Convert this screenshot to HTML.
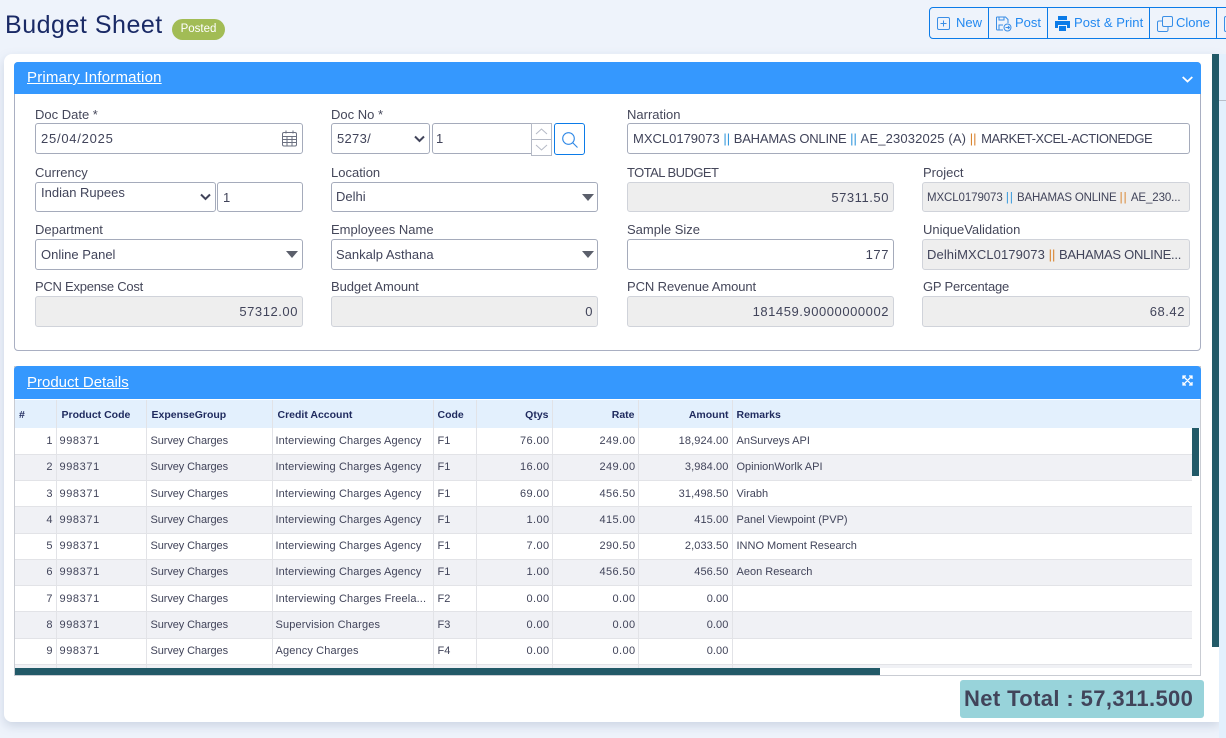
<!DOCTYPE html>
<html lang="en"><head><meta charset="utf-8"><title>Budget Sheet</title>
<style>
*{box-sizing:border-box}
html,body{margin:0;padding:0}
body{width:1226px;height:738px;overflow:hidden;background:#eef3fb;position:relative;font-family:"Liberation Sans",sans-serif;color:#3f4254}
.a{position:absolute;white-space:nowrap}
.lb{position:absolute;font-size:13px;line-height:16px;color:#45475a;white-space:nowrap}
.in{position:absolute;background:#fff;border:1px solid #a5abbb;border-radius:3px;font-size:13px;line-height:29px;padding:0 5px;color:#41445a;white-space:nowrap;overflow:hidden}
.ro{background:#eeeeee;border-color:#d0d3da;text-align:right;padding-right:4px;letter-spacing:.55px}
.b{color:#2f95dc}.o{color:#d9822b}
.hdr{position:absolute;background:#3598fe;border-radius:4px 4px 0 0;color:#fff}
.hdr span{position:absolute;left:13px;top:6px;font-size:15px;line-height:19px;text-decoration:underline}
.btn{position:absolute;top:7px;height:32px;border:1px solid #0b7be8;border-left:0;background:transparent;color:#2288f0;font-size:13px;line-height:29px;white-space:nowrap}
.btn span{position:absolute;top:0}
.btn svg{position:absolute}
table{position:absolute;left:15px;top:400px;border-collapse:collapse;table-layout:fixed;width:1177px;font-size:11px;color:#41445a}
th{height:28px;background:#e3f0fd;color:#1f2a5e;font-size:10.5px;text-align:left;padding:2px 3px 0 5px;border-right:1px solid #e2e3e7;font-weight:700;white-space:nowrap}
th:nth-child(1),th:nth-child(5),th:nth-child(9){padding-left:4px}
td{height:26.25px;padding:0 3px 0 4px;border-right:1px solid #e2e3e7;border-bottom:1px solid #e2e3e7;white-space:nowrap;overflow:hidden}
th:last-child,td:last-child{border-right:0}
tr:nth-child(even) td{background:#f0f1f5}
td:nth-child(2){letter-spacing:.6px;padding-left:3px}
td:nth-child(3){letter-spacing:-.1px}
td:nth-child(4){letter-spacing:.13px;padding-left:3px}
td:nth-child(6),td:nth-child(7){letter-spacing:.4px;padding-right:2px}
td:nth-child(8){letter-spacing:.1px;padding-right:3px}
.r{text-align:right}
</style></head>
<body>
<div class="a" style="left:5px;top:9px;font-size:25px;line-height:32px;color:#1a2a66;letter-spacing:.52px">Budget Sheet</div>
<div class="a" style="left:172px;top:19px;width:53px;height:21px;border-radius:11px;background:#a2bc55;color:#fff;font-size:11.5px;line-height:21px;text-align:center">Posted</div>

<div class="btn" style="left:929px;width:60px;border-left:1px solid #0b7be8;border-radius:4px 0 0 4px"><svg style="left:7px;top:9px" width="14" height="14" viewBox="0 0 14 14" fill="none" stroke="#3a8ee6"><rect x=".5" y=".5" width="12" height="12" rx="1.5"/><path d="M6.5 3.5v6M3.5 6.5h6"/></svg><span style="left:26px">New</span></div>
<div class="btn" style="left:989px;width:59px"><svg style="left:6px;top:8px" width="18" height="16" viewBox="0 0 18 16" fill="none" stroke="#3a8ee6"><path d="M1.5 1h9l2.5 2.5V7M8 14H2.500a1 1 0 0 1-1-1V1M4 1v3h5V1M4 14V9h4"/><circle cx="12.500" cy="11.500" r="3.500"/><path d="M10.500 11.500h4M13 10l1.500 1.500L13 13"/></svg><span style="left:26px">Post</span></div>
<div class="btn" style="left:1048px;width:102px"><svg style="left:7px;top:8px" width="15" height="15" viewBox="0 0 15 15" fill="#0b7be8"><path d="M3 0h9v4H3zM0 5h15v7h-3V9H3v3H0z"/><path d="M4 10h7v5H4z"/></svg><span style="left:26px;letter-spacing:.05px">Post &amp; Print</span></div>
<div class="btn" style="left:1150px;width:67px"><svg style="left:7px;top:8px" width="16" height="16" viewBox="0 0 16 16" fill="none" stroke="#3a8ee6"><rect x="5.500" y=".5" width="10" height="10" rx="1.500"/><path d="M5 5H2a1.500 1.500 0 0 0-1.500 1.500V14A1.500 1.500 0 0 0 2 15.500h7.500A1.500 1.500 0 0 0 11 14v-3"/></svg><span style="left:26px">Clone</span></div>
<div class="btn" style="left:1217px;width:20px"><svg style="left:7px;top:8px" width="13" height="16" viewBox="0 0 13 16" fill="none" stroke="#3a8ee6"><rect x=".5" y=".5" width="12" height="15" rx="1.500"/></svg></div>

<div class="a" style="left:4px;top:54px;width:1215px;height:668px;background:#fff;border-radius:8px 0 0 8px;box-shadow:0 4px 10px rgba(120,135,170,.28)"></div>
<div class="a" style="left:1219px;top:54px;width:7px;height:684px;background:#e3f0fd"></div>
<div class="a" style="left:1219px;top:100px;width:7px;height:1px;background:#b8bec9"></div>
<div class="a" style="left:1212px;top:54px;width:7px;height:593px;background:#225a68"></div>

<!-- Primary -->
<div class="a" style="left:14px;top:62px;width:1187px;height:289px;border:1px solid #a9afc2;border-radius:4px"></div>
<div class="hdr" style="left:14px;top:62px;width:1187px;height:32px"><span style="letter-spacing:.2px">Primary Information</span>
<svg style="position:absolute;left:1168px;top:14px" width="11" height="7" viewBox="0 0 11 7" fill="none" stroke="#fff" stroke-width="1.800"><path d="M.7 1l4.800 4.500L10.300 1"/></svg></div>

<div class="lb" style="left:35px;top:107px">Doc Date *</div>
<div class="in" style="left:35px;top:123px;width:268px;height:31px;letter-spacing:.75px">25/04/2025</div>
<svg class="a" style="left:282px;top:130px" width="15" height="17" viewBox="0 0 15 17" fill="none" stroke="#6b7080"><rect x=".5" y="2.500" width="14" height="13.500" rx="1.500"/><path d="M.5 6.500h14M.5 9.500h14M.5 12.500h14M5 6.500V16M10 6.500V16M4 .5v3M11 .5v3"/></svg>

<div class="lb" style="left:331px;top:107px">Doc No *</div>
<div class="in" style="left:331px;top:123px;width:99px;height:31px;letter-spacing:.3px">5273/</div>
<svg class="a" style="left:414px;top:135px" width="11" height="8" viewBox="0 0 11 8" fill="none" stroke="#41445a" stroke-width="2"><path d="M1 1.500l4.500 4.500 4.500-4.500"/></svg>
<div class="in" style="left:432px;top:123px;width:100px;height:31px;padding-left:3px;border-radius:3px 0 0 3px">1</div>
<div class="a" style="left:531px;top:123px;width:21px;height:33px;border:1px solid #b5bac6;background:#fff"></div>
<div class="a" style="left:531px;top:139px;width:21px;height:1px;background:#b5bac6"></div>
<svg class="a" style="left:535px;top:128px" width="13" height="24" viewBox="0 0 13 24" fill="none" stroke="#b5bac6"><path d="M1 6l5.500-5L12 6M1 17l5.500 5 5.500-5"/></svg>
<div class="a" style="left:554px;top:123px;width:31px;height:32px;border:1px solid #0b7be8;border-radius:3px;background:#fff"></div>
<svg class="a" style="left:562px;top:132px" width="16" height="16" viewBox="0 0 16 16" fill="none" stroke="#2f88e6" stroke-width="1.100"><circle cx="6.500" cy="6.500" r="5.800"/><path d="M10.500 10.500L15.500 15.500"/></svg>

<div class="lb" style="left:627px;top:107px">Narration</div>
<div class="in" style="left:627px;top:123px;width:563px;height:31px">MXCL0179073 <span class="b">||</span> <span style="letter-spacing:-.2px">BAHAMAS ONLINE</span> <span class="b">||</span> <span style="letter-spacing:.15px">AE_23032025 (A)</span> <span class="o">||</span> <span style="letter-spacing:-.5px;margin-left:1px">MARKET-XCEL-ACTIONEDGE</span></div>

<div class="lb" style="left:35px;top:165px">Currency</div>
<div class="in" style="left:35px;top:182px;width:181px;height:30px;line-height:20px">Indian Rupees</div>
<svg class="a" style="left:200px;top:193px" width="11" height="8" viewBox="0 0 11 8" fill="none" stroke="#41445a" stroke-width="2"><path d="M1 1.500l4.500 4.500 4.500-4.500"/></svg>
<div class="in" style="left:217px;top:182px;width:86px;height:30px;line-height:29px">1</div>

<div class="lb" style="left:331px;top:165px">Location</div>
<div class="in" style="left:331px;top:182px;width:267px;height:30px;line-height:28px;padding-left:4px">Delhi</div>
<svg class="a" style="left:582px;top:194px" width="12" height="8" viewBox="0 0 12 8"><path d="M0 0h12L6 7z" fill="#5b5f6b"/></svg>

<div class="lb" style="left:627px;top:165px;letter-spacing:-.55px">TOTAL BUDGET</div>
<div class="in ro" style="left:627px;top:182px;width:267px;height:30px">57311.50</div>
<div class="lb" style="left:923px;top:165px">Project</div>
<div class="in ro" style="left:922px;top:182px;width:268px;height:30px;text-align:left;font-size:11.5px;padding-left:4px;letter-spacing:0;line-height:30px"><span style="letter-spacing:-.1px">MXCL0179073</span> <span class="b" style="letter-spacing:1px">||</span> <span style="letter-spacing:-.2px">BAHAMAS ONLINE</span> <span class="o" style="letter-spacing:1px">||</span> <span style="letter-spacing:-.1px">AE_230...</span></div>

<div class="lb" style="left:35px;top:222px">Department</div>
<div class="in" style="left:35px;top:239px;width:268px;height:31px">Online Panel</div>
<svg class="a" style="left:286px;top:251px" width="12" height="8" viewBox="0 0 12 8"><path d="M0 0h12L6 7z" fill="#5b5f6b"/></svg>
<div class="lb" style="left:331px;top:222px">Employees Name</div>
<div class="in" style="left:331px;top:239px;width:267px;height:31px;padding-left:4px">Sankalp Asthana</div>
<svg class="a" style="left:582px;top:251px" width="12" height="8" viewBox="0 0 12 8"><path d="M0 0h12L6 7z" fill="#5b5f6b"/></svg>
<div class="lb" style="left:627px;top:222px">Sample Size</div>
<div class="in" style="left:627px;top:239px;width:267px;height:31px;text-align:right;padding-right:4px;letter-spacing:.55px">177</div>
<div class="lb" style="left:923px;top:222px">UniqueValidation</div>
<div class="in ro" style="left:922px;top:239px;width:268px;height:31px;text-align:left;padding-left:4px;letter-spacing:0"><span style="letter-spacing:.1px">DelhiMXCL0179073</span> <span class="o">||</span> <span style="letter-spacing:-.25px">BAHAMAS ONLINE...</span></div>

<div class="lb" style="left:35px;top:279px;letter-spacing:-.25px">PCN Expense Cost</div>
<div class="in ro" style="left:35px;top:296px;width:268px;height:31px">57312.00</div>
<div class="lb" style="left:331px;top:279px;letter-spacing:-.1px">Budget Amount</div>
<div class="in ro" style="left:331px;top:296px;width:267px;height:31px">0</div>
<div class="lb" style="left:627px;top:279px;letter-spacing:-.1px">PCN Revenue Amount</div>
<div class="in ro" style="left:627px;top:296px;width:267px;height:31px">181459.90000000002</div>
<div class="lb" style="left:923px;top:279px;letter-spacing:-.2px">GP Percentage</div>
<div class="in ro" style="left:922px;top:296px;width:268px;height:31px">68.42</div>

<!-- Product -->
<div class="a" style="left:14px;top:366px;width:1187px;height:310px;border:1px solid #c9ccd3"></div>
<div class="hdr" style="left:14px;top:366px;width:1187px;height:33px"><span style="top:7px">Product Details</span>
<svg style="position:absolute;left:1168px;top:9px" width="11" height="11" viewBox="0 0 11 11" fill="none" stroke="#fff" stroke-width="1.300"><path d="M1 1l9 9M10 1l-9 9M1 4V1h3M7 1h3v3M10 7v3H7M4 10H1V7"/></svg></div>
<div class="a" style="left:15px;top:400px;width:1185px;height:28px;background:#e3f0fd"></div>
<div class="a" style="left:15px;top:400px;width:1177px;height:268px;overflow:hidden">
<table style="left:0;top:0"><colgroup><col style="width:41px"><col style="width:90px"><col style="width:126px"><col style="width:161px"><col style="width:43px"><col style="width:76px"><col style="width:86px"><col style="width:94px"><col></colgroup>
<thead><tr><th>#</th><th>Product Code</th><th>ExpenseGroup</th><th>Credit Account</th><th>Code</th><th class="r">Qtys</th><th class="r">Rate</th><th class="r">Amount</th><th>Remarks</th></tr></thead>
<tbody>
<tr><td class="r">1</td><td>998371</td><td>Survey Charges</td><td>Interviewing Charges Agency</td><td>F1</td><td class="r">76.00</td><td class="r">249.00</td><td class="r">18,924.00</td><td>AnSurveys API</td></tr>
<tr><td class="r">2</td><td>998371</td><td>Survey Charges</td><td>Interviewing Charges Agency</td><td>F1</td><td class="r">16.00</td><td class="r">249.00</td><td class="r">3,984.00</td><td>OpinionWorlk API</td></tr>
<tr><td class="r">3</td><td>998371</td><td>Survey Charges</td><td>Interviewing Charges Agency</td><td>F1</td><td class="r">69.00</td><td class="r">456.50</td><td class="r">31,498.50</td><td>Virabh</td></tr>
<tr><td class="r">4</td><td>998371</td><td>Survey Charges</td><td>Interviewing Charges Agency</td><td>F1</td><td class="r">1.00</td><td class="r">415.00</td><td class="r">415.00</td><td>Panel Viewpoint (PVP)</td></tr>
<tr><td class="r">5</td><td>998371</td><td>Survey Charges</td><td>Interviewing Charges Agency</td><td>F1</td><td class="r">7.00</td><td class="r">290.50</td><td class="r">2,033.50</td><td>INNO Moment Research</td></tr>
<tr><td class="r">6</td><td>998371</td><td>Survey Charges</td><td>Interviewing Charges Agency</td><td>F1</td><td class="r">1.00</td><td class="r">456.50</td><td class="r">456.50</td><td>Aeon Research</td></tr>
<tr><td class="r">7</td><td>998371</td><td>Survey Charges</td><td>Interviewing Charges Freela...</td><td>F2</td><td class="r">0.00</td><td class="r">0.00</td><td class="r">0.00</td><td></td></tr>
<tr><td class="r">8</td><td>998371</td><td>Survey Charges</td><td>Supervision Charges</td><td>F3</td><td class="r">0.00</td><td class="r">0.00</td><td class="r">0.00</td><td></td></tr>
<tr><td class="r">9</td><td>998371</td><td>Survey Charges</td><td>Agency Charges</td><td>F4</td><td class="r">0.00</td><td class="r">0.00</td><td class="r">0.00</td><td></td></tr>
<tr><td></td><td></td><td></td><td></td><td></td><td></td><td></td><td></td><td></td></tr>
</tbody></table></div>
<div class="a" style="left:1192px;top:428px;width:7px;height:48px;background:#225a68"></div>
<div class="a" style="left:15px;top:668px;width:865px;height:7px;background:#225a68"></div>

<div class="a" style="left:960px;top:680px;width:244px;height:38px;background:#98d3da;border-radius:3px;color:#41445a;font-size:22px;font-weight:700;line-height:38px;padding-left:4px;letter-spacing:.38px">Net Total : 57,311.500</div>
</body></html>
